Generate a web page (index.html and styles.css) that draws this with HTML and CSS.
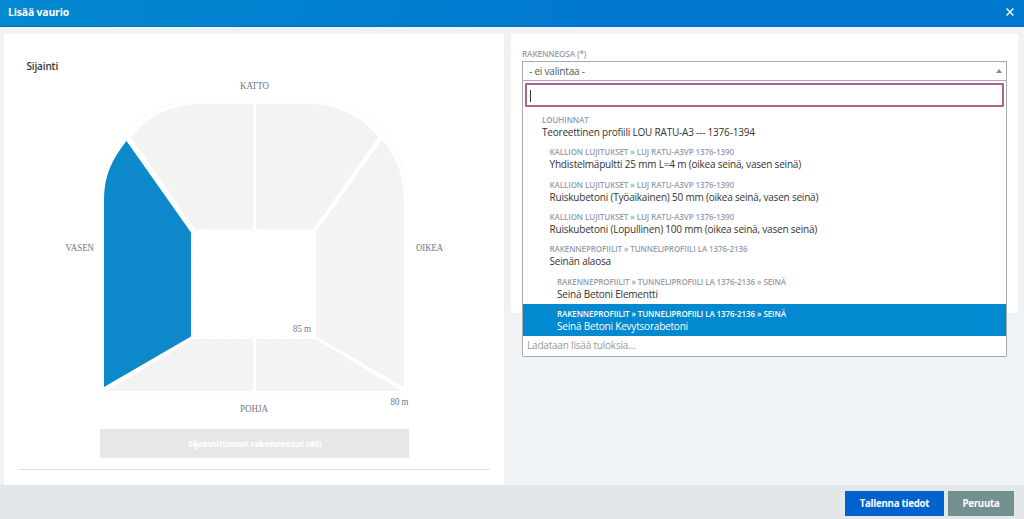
FILE: index.html
```html
<!DOCTYPE html>
<html lang="fi">
  <head>
    <meta charset="UTF-8">
    <meta name="viewport" content="width=device-width, initial-scale=1">
    <title>Lisää vaurio</title>
    <link rel="stylesheet" href="styles.css">
  </head>
  <body>
    <header class="dialog-header">
      <h1>Lisää vaurio</h1>
      <button class="close" aria-label="Sulje">
        <svg width="8" height="8" viewBox="0 0 8 8"><path d="M0.6 0.6L7.4 7.4M7.4 0.6L0.6 7.4"/></svg>
      </button>
    </header>

    <main class="dialog-body">
      <section class="panel location">
        <h2>Sijainti</h2>
        <svg class="tunnel" width="390" height="342" viewBox="60 76 390 342">
          <path class="outline" d="M101 394V196C101 142 142 101 196 101H313C366 101 407 142 407 196V394Z"/>
          <rect class="outline" x="193" y="231.500" width="121" height="105" stroke-dasharray="8 6"/>
          <path class="part" d="M131 137C148 116 172 104 200 104H253V229.500H195Z"/>
          <path class="part" d="M256 104H309C337 104 361 116 378.500 137L313 229.500H256Z"/>
          <path class="part" d="M382 139.500C396 156 404 176 404 201V387L316 336.500V232Z"/>
          <path class="part" d="M193 339H253V391H107Z"/>
          <path class="part" d="M256 339H316L401 391H256Z"/>
          <path class="part selected" d="M126.500 141L191 232.500V336.500L104 387V199C104 176 112 159 126.500 141Z"/>
          <text x="240" y="89" textLength="29" lengthAdjust="spacingAndGlyphs">KATTO</text>
          <text x="65.500" y="250.500" textLength="28.500" lengthAdjust="spacingAndGlyphs">VASEN</text>
          <text x="416" y="250.500" textLength="27" lengthAdjust="spacingAndGlyphs">OIKEA</text>
          <text x="240" y="412" textLength="28" lengthAdjust="spacingAndGlyphs">POHJA</text>
          <text x="293" y="332" textLength="18" lengthAdjust="spacingAndGlyphs">85 m</text>
          <text x="390.500" y="404.500" textLength="18" lengthAdjust="spacingAndGlyphs">80 m</text>
        </svg>
        <button class="unplaced" disabled>Sijainnittomat rakenneosat (49)</button>
        <hr>
      </section>

      <section class="panel part-form">
        <label>RAKENNEOSA (*)</label>
        <div class="select">
          <div class="select-value">- ei valintaa -<span class="arrow"></span></div>
          <div class="dropdown">
            <div class="search"><span class="caret"></span></div>
            <ul class="options">
              <li><small>LOUHINNAT</small><span>Teoreettinen profiili LOU RATU-A3 --- 1376-1394</span></li>
              <li class="level-2"><small>KALLION LUJITUKSET » LUJ RATU-A3VP 1376-1390</small><span>Yhdistelmäpultti 25 mm L=4 m (oikea seinä, vasen seinä)</span></li>
              <li class="level-2"><small>KALLION LUJITUKSET » LUJ RATU-A3VP 1376-1390</small><span>Ruiskubetoni (Työaikainen) 50 mm (oikea seinä, vasen seinä)</span></li>
              <li class="level-2"><small>KALLION LUJITUKSET » LUJ RATU-A3VP 1376-1390</small><span>Ruiskubetoni (Lopullinen) 100 mm (oikea seinä, vasen seinä)</span></li>
              <li class="level-2"><small>RAKENNEPROFIILIT » TUNNELIPROFIILI LA 1376-2136</small><span>Seinän alaosa</span></li>
              <li class="level-3"><small>RAKENNEPROFIILIT » TUNNELIPROFIILI LA 1376-2136 » SEINÄ</small><span>Seinä Betoni Elementti</span></li>
              <li class="level-3 highlighted"><small>RAKENNEPROFIILIT » TUNNELIPROFIILI LA 1376-2136 » SEINÄ</small><span>Seinä Betoni Kevytsorabetoni</span></li>
            </ul>
            <div class="loading">Ladataan lisää tuloksia…</div>
          </div>
        </div>
      </section>
    </main>

    <footer class="dialog-footer">
      <button class="save">Tallenna tiedot</button>
      <button class="cancel">Peruuta</button>
    </footer>
  </body>
</html>
```

FILE: styles.css
```css
* {
  box-sizing: border-box;
}
body {
  margin: 0;
  height: 519px;
  display: flex;
  flex-direction: column;
  overflow: hidden;
  font-family: "Open Sans", sans-serif;
  font-size: 10px;
  letter-spacing: -0.2px;
  color: #333;
  background: #f0f3f6;
}
h1, h2, ul {
  margin: 0;
  padding: 0;
}
button {
  border: 0;
  padding: 0;
  font-family: inherit;
  font-weight: bold;
  color: #fff;
}
.dialog-header {
  flex: 0 0 27px;
  display: flex;
  align-items: center;
  justify-content: space-between;
  padding: 0 10px 3px 8px;
  background: linear-gradient(100deg, #0488d0, #0078d0 60%);
  border-bottom: 1px solid #0870ba;
  color: #fff;
}
h1 {
  font-size: 10.4px;
  line-height: 14px;
  letter-spacing: -0.15px;
}
.close {
  display: flex;
  background: none;
}
.close path {
  fill: none;
  stroke: #fff;
  stroke-width: 1.4;
}
.dialog-body {
  flex: 1;
  display: flex;
  align-items: flex-start;
  gap: 7px;
  padding: 7px 6px 0 4px;
}
.panel {
  background: #fff;
}
.location {
  width: 500px;
  height: 451px;
  padding: 24px 14px 0;
}
h2 {
  padding-left: 8.5px;
  height: 18px;
  font-size: 10px;
  line-height: 16px;
  font-weight: 600;
  letter-spacing: -0.15px;
}
.tunnel {
  display: block;
  margin-left: 42px;
}
.outline {
  fill: none;
  stroke: #fafafa;
}
.part {
  fill: #f3f3f3;
}
.selected {
  fill: #0d88cb;
}
.tunnel text {
  font-family: "Liberation Serif", serif;
  font-size: 9.6px;
  letter-spacing: 0;
  fill: #6b7785;
}
.unplaced {
  display: block;
  width: 309px;
  height: 29px;
  margin: 11px 0 11px 82px;
  background: #e7e7e7;
  font-size: 9.2px;
  letter-spacing: -0.4px;
}
hr {
  margin: 0;
  border: 0;
  border-top: 1px solid #ddd;
}
.part-form {
  flex: 1;
  height: 279px;
  padding: 13px 11px 0;
}
label {
  display: block;
  height: 14px;
  line-height: 13px;
  font-size: 8.2px;
  font-weight: 600;
  letter-spacing: -0.12px;
  color: #949dab;
}
.select {
  position: relative;
}
.select-value {
  display: flex;
  align-items: center;
  justify-content: space-between;
  height: 20px;
  padding: 0 4px 0 6px;
  border: 1px solid #aaa;
  border-bottom-color: #b9a5b7;
  color: #555;
}
.arrow {
  border: 3px solid transparent;
  border-top: 0;
  border-bottom: 4px solid #888;
}
.dropdown {
  position: absolute;
  top: 20px;
  left: 0;
  right: 0;
  height: 276px;
  padding-top: 2px;
  background: #fff;
  border: 1px solid #aaa;
  border-top: 0;
  border-radius: 0 0 2px 2px;
}
.search {
  height: 24px;
  margin: 0 2px 3.2px;
  padding: 5px 3px;
  border: 2px solid #a9648f;
  border-radius: 1px;
}
.caret {
  display: block;
  width: 1px;
  height: 12px;
  background: #333;
}
.options {
  list-style: none;
}
.options li {
  height: 32.3px;
  padding: 4px 0 0 19px;
  white-space: nowrap;
}
.options .level-2 {
  padding-left: 26.5px;
}
.options .level-3 {
  padding-left: 34px;
}
.options small {
  display: block;
  font-size: 8px;
  line-height: 12px;
  font-weight: 600;
  letter-spacing: -0.08px;
  color: #949dab;
}
.options span {
  display: block;
  line-height: 13px;
}
.options .highlighted,
.options .highlighted small {
  background: #0389d0;
  color: #fff;
}
.loading {
  padding-left: 4px;
  line-height: 19px;
  color: #999;
}
.dialog-footer {
  flex: 0 0 35px;
  display: flex;
  justify-content: flex-end;
  gap: 4px;
  padding: 6px 10px 4px;
  background: #e4e7ea;
}
.dialog-footer button {
  font-size: 9.7px;
  letter-spacing: -0.25px;
}
.save {
  width: 99px;
  background: #0062cf;
}
.cancel {
  width: 66px;
  background: #729090;
}
```
